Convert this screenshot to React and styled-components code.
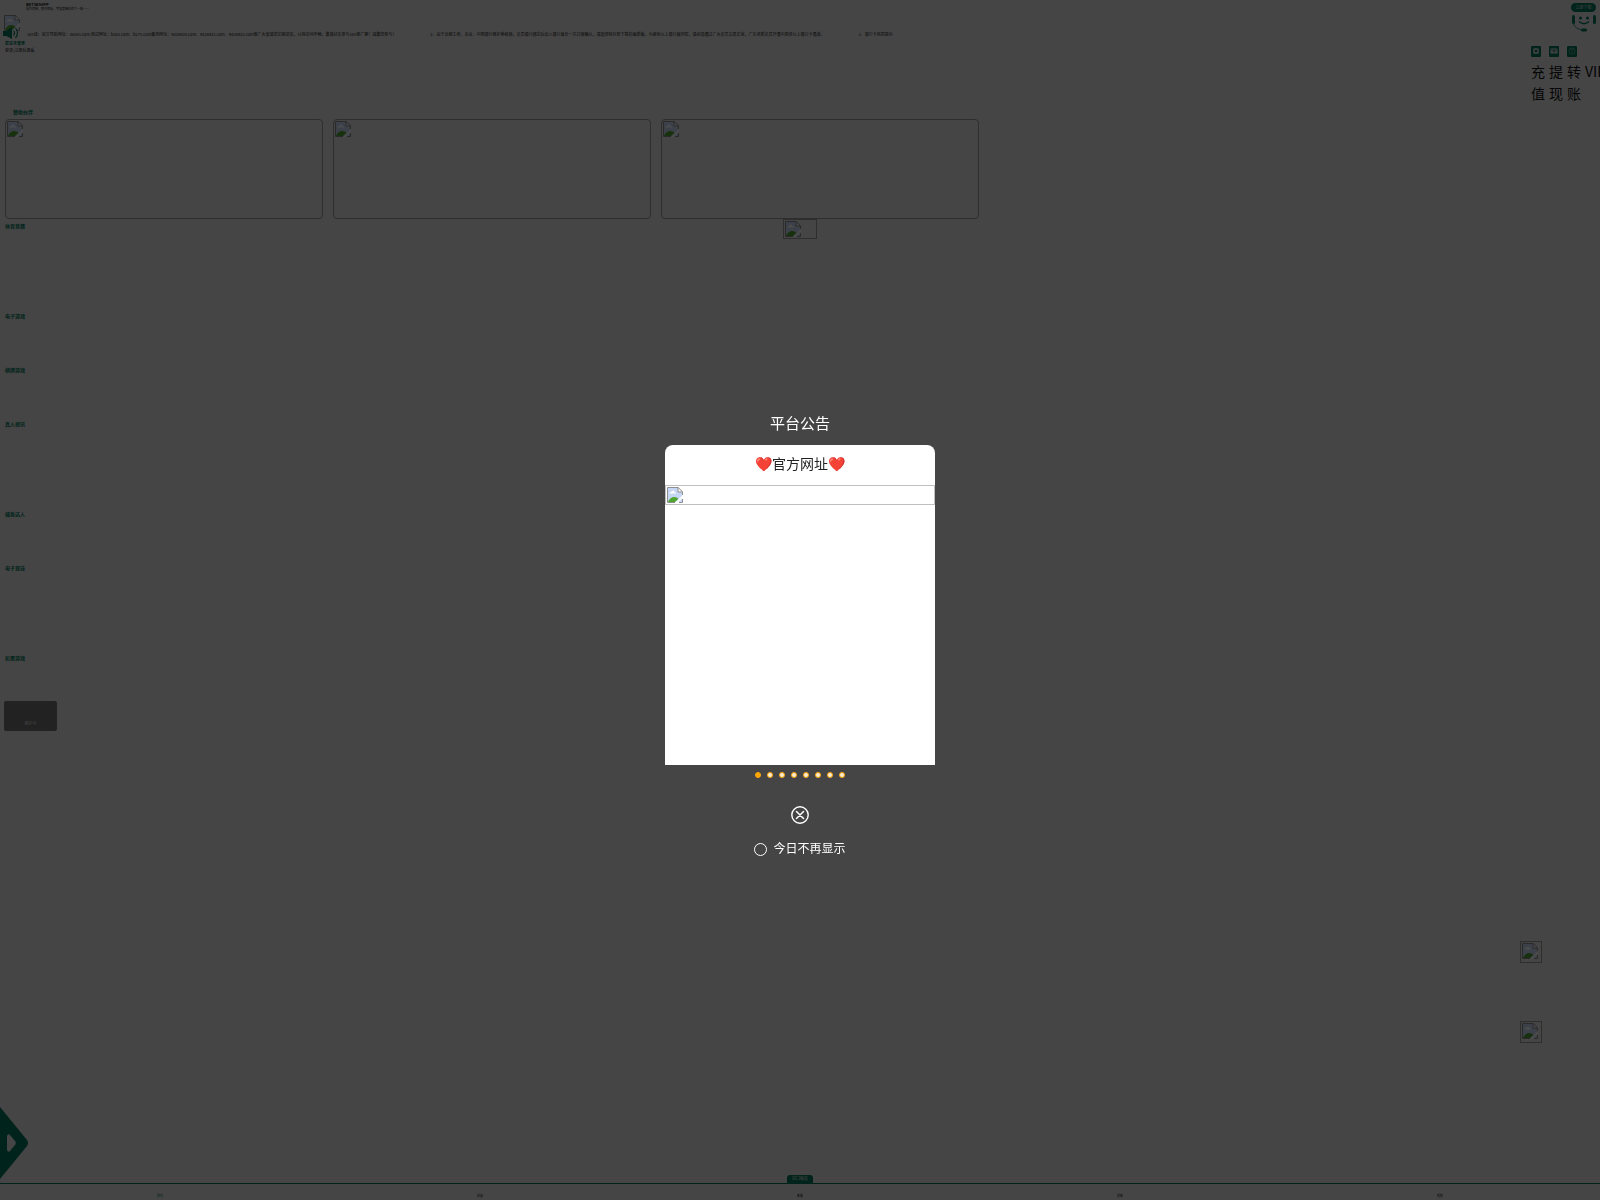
import React, { useState } from 'react';
import styled, { createGlobalStyle } from 'styled-components';

const GREEN = '#00785a';

const GlobalStyle = createGlobalStyle`
  * { box-sizing: border-box; }
  html, body { margin: 0; padding: 0; overflow: hidden; }
  body {
    background: #e6e6e6;
    color: #222;
    font-family: "Noto Sans CJK SC", "Noto Sans", sans-serif;
    font-size: 14px;
  }
  button, input { font: inherit; margin: 0; padding: 0; }
  button { border: 0; background: none; cursor: pointer; }
  h1, h2, p { margin: 0; font-weight: inherit; }
  a { color: inherit; text-decoration: none; }
  svg { display: block; flex: none; }
`;

const Page = styled.div`
  min-height: 100vh;
  overflow: hidden;
`;

const Header = styled.header`
  display: flex;
  justify-content: space-between;
  min-height: 107px;
`;

const HeaderMain = styled.div`
  flex: 1;
  min-width: 0;
`;

const AppPromo = styled.div`
  padding: 2px 0 0 26px;
  font-size: 3px;
  line-height: 5px;
  color: #222;
`;

const AppName = styled.h1`
  font-size: 4px;
  font-weight: 700;
  line-height: 5px;
  color: #111;
`;

const NoticeRow = styled.div`
  display: flex;
  align-items: flex-end;
  height: 26px;
  padding: 2px 0 0 4px;
  margin-top: 1px;
`;

const Avatar = styled.div`
  position: relative;
  width: 16px;
  height: 24px;
  margin-right: 7px;
`;

const Speaker = styled.svg`
  position: absolute;
  left: -1px;
  top: 12px;
`;

const NoticeText = styled.p`
  display: flex;
  font-size: 4px;
  line-height: 6px;
  padding-bottom: 2px;
  color: #222;
  white-space: pre;
`;

const NoticeItem = styled.span`
  flex: none;
  margin-right: 34px;
`;

const UserBox = styled.div`
  padding: 1px 0 0 5px;
  font-size: 4px;
  line-height: 7px;
  color: #222;
`;

const UserName = styled.a`
  display: block;
  font-weight: 700;
  color: ${GREEN};
`;

const HeaderSide = styled.div`
  display: flex;
  flex-direction: column;
  align-items: flex-end;
  width: 69px;
  padding-top: 3px;
`;

const Download = styled.button`
  width: 25px;
  height: 9px;
  margin-right: 4px;
  border-radius: 5px;
  background: ${GREEN};
  color: #ddd;
  font-size: 4px;
  line-height: 7px;
`;

const Service = styled.button`
  margin: 2px 4px 0 0;
`;

const Actions = styled.nav`
  display: flex;
  gap: 4px;
  width: 100%;
  margin-top: 14px;
`;

const Action = styled.a`
  flex: none;
  width: 14px;
  font-size: 14px;
  line-height: 22px;
  color: #111;

  svg { margin-bottom: 3px; }
`;

const ActionGap = styled.span`
  display: block;
  height: 14px;
`;

const SectionTitle = styled.h2`
  padding-left: ${(p) => p.$inset || 5}px;
  font-size: 5px;
  font-weight: 700;
  line-height: 9px;
  color: ${GREEN};
`;

const Partners = styled.div`
  display: flex;
  gap: 10px;
  padding: 3px 5px 0;
`;

const BrokenBox = styled.div`
  flex: none;
  width: ${(p) => p.$width};
  height: ${(p) => p.$height}px;
  padding: 1px;
  border: 1px solid ${(p) => (p.$light ? '#c0c0c0' : '#999')};
  border-radius: ${(p) => p.$radius || 0}px;
`;

const Loading = styled.div`
  display: flex;
  justify-content: center;
  height: 20px;
  margin: 0 0 -18px;
`;

const GameSection = styled.section`
  height: ${(p) => p.$height}px;
`;

const Maintenance = styled.div`
  display: flex;
  align-items: flex-end;
  justify-content: center;
  width: 53px;
  height: 30px;
  margin-left: 4px;
  padding-bottom: 4px;
  border-radius: 2px;
  background: #727272;
  color: #ddd;
  font-size: 4px;
  line-height: 8px;
`;

const FloatStack = styled.aside`
  position: fixed;
  right: 58px;
  bottom: 157px;
  display: flex;
  flex-direction: column;
  gap: 58px;
`;

const SideDrawer = styled.button`
  position: fixed;
  left: 0;
  bottom: 21px;
`;

const TabBar = styled.nav`
  position: fixed;
  left: 0;
  right: 0;
  bottom: 0;
  display: grid;
  grid-template-columns: repeat(5, 1fr);
  height: 17px;
  border-top: 1px solid ${GREEN};
`;

const Tab = styled.a`
  padding-top: 10px;
  font-size: 3px;
  line-height: 5px;
  text-align: center;
  color: ${(p) => (p.$active ? GREEN : '#222')};
`;

const TabBadge = styled.a`
  position: absolute;
  left: calc(50% - 13px);
  bottom: 16px;
  width: 26px;
  height: 9px;
  border-radius: 3px 3px 0 0;
  background: ${GREEN};
  color: #ddd;
  font-size: 4px;
  line-height: 7px;
  text-align: center;
`;

const Overlay = styled.div`
  position: fixed;
  inset: 0;
  z-index: 10;
  display: flex;
  flex-direction: column;
  align-items: center;
  justify-content: center;
  padding-top: 68px;
  background: rgba(0, 0, 0, 0.7);
  color: #fff;
`;

const DialogTitle = styled.h2`
  margin-bottom: 12px;
  font-size: 15px;
  line-height: 21px;
`;

const Panel = styled.div`
  width: 270px;
  height: 320px;
  border-radius: 8px 8px 0 0;
  background: #fff;
  color: #222;
`;

const PanelTitle = styled.p`
  padding-bottom: 4px;
  font-size: 14px;
  line-height: 36px;
  text-align: center;
`;

const Dots = styled.div`
  display: flex;
  gap: 6px;
  margin-top: 7px;
`;

const Dot = styled.button`
  width: 6px;
  height: 6px;
  border: 1px solid #ffa500;
  border-radius: 50%;
  background: ${(p) => (p.$active ? '#ffa500' : '#ffecd6')};
`;

const Close = styled.button`
  margin-top: 28px;
  line-height: 0;
`;

const HideToday = styled.label`
  display: flex;
  align-items: flex-end;
  gap: 6px;
  margin-top: 15px;
  font-size: 12px;
  line-height: 18px;
`;

const Check = styled.input`
  appearance: none;
  width: 13px;
  height: 13px;
  margin-bottom: 1px;
  border: 1px solid #fff;
  border-radius: 50%;

  &:checked { background: #ffa500; }
`;

function BrokenIcon() {
  return (
    <svg width="16" height="16" viewBox="0 0 16 16" aria-hidden="true">
      <path d="M1 1h10l4 4v10H1z" fill="#c6d7f5" />
      <path d="M2.500 6.500c0-1.300 1-1.800 1.800-1.500.6-1.600 3-1.500 3.200.2 1-.1 1.500.5 1.500 1.300z" fill="#fff" />
      <path d="M1 15c1-3 3.500-5 6.200-5 2 0 3.300.9 4.300 2L8 15z" fill="#4fa52f" />
      <path d="M16 7.500 7.500 16H11l5-5z" fill="#fff" opacity=".8" />
      <path d="M11 1v4h4z" fill="#fff" />
      <path d="M15.500 8V4.800L11.200.5H.5v15H8M11 .5V5h4.500M12 15.500h3.500V12" fill="none" stroke="#8e8e8e" />
    </svg>
  );
}

function BrokenImage(props) {
  return (
    <BrokenBox {...props}>
      <BrokenIcon />
    </BrokenBox>
  );
}

function ActionIcon({ kind }) {
  return (
    <svg width="10" height="11" viewBox="0 0 10 11" aria-hidden="true">
      <rect width="10" height="11" rx="1" fill={GREEN} />
      {kind === 'deposit' && (
        <>
          <circle cx="5" cy="5" r="2.200" fill="none" stroke="#ddd" strokeWidth="1.500" />
          <path d="M2.500 3.200h1M6.500 3.200h1M2.500 7.200h1M6.500 7.200h1" stroke="#ddd" />
        </>
      )}
      {kind === 'withdraw' && (
        <>
          <rect x="1.500" y="2.500" width="7" height="5" fill="#ddd" />
          <path d="M1.500 4h7M5 4v2.500M3.800 5.300h2.400" stroke={GREEN} strokeWidth=".7" />
        </>
      )}
      {kind === 'transfer' && (
        <>
          <circle cx="5" cy="5" r="3" fill="none" stroke="#7fb5a5" strokeWidth=".7" />
          <path d="M4 4c0-1.500 2.200-1.200 2 0-.1.8-1 .7-1 1.800M5 6.500v.7" fill="none" stroke="#7fb5a5" strokeWidth=".7" />
        </>
      )}
    </svg>
  );
}

const notices = [
  '365线：官方导航网址：46365.com 测试网址：b365.com、b275.com备用网址：9426920.com、9426921.com、9426922.com推广大使请您定期浏览，以得访问不畅。邀请好友参与365推广惠！诚邀您参与！',
  '2、由于近期工商、农业、中国银行维护系统频，会员银行绑定后出入银行最长一共只需确认，请选择除存款下载的最新版，为避免以上银行被列控，请必选通过广大会员交易正常，广东省新会员开通中国省以上银行卡通道。',
  '3、银行卡风控提示',
];

const sections = [
  ['体育竞猜', 90],
  ['电子游戏', 54],
  ['棋牌游戏', 54],
  ['真人视讯', 90],
  ['捕鱼达人', 54],
  ['电子竞技', 90],
  ['彩票游戏', 48],
];

const tabs = ['首页', '优惠', '客服', '赞助', '我的'];

export default function App() {
  const [slide, setSlide] = useState(0);
  const [open, setOpen] = useState(true);

  return (
    <>
      <GlobalStyle />
      <Page>
        <Header>
          <HeaderMain>
            <AppPromo>
              <AppName>BET365APP</AppName>
              <p>操作简单，即开即玩，等您更精彩的下一刻……</p>
            </AppPromo>
            <NoticeRow>
              <Avatar>
                <BrokenIcon />
                <Speaker width="16" height="12" viewBox="0 0 16 12" aria-hidden="true">
                  <path d="M0 4h3.500L9 0v12L3.500 9H0z" fill={GREEN} />
                  <path d="M10.500 3.500q2 2.500 0 5M12.500 1q4 5 0 10" fill="none" stroke={GREEN} strokeWidth="1.200" />
                </Speaker>
              </Avatar>
              <NoticeText>
                {notices.map((n) => <NoticeItem key={n}>{n}</NoticeItem>)}
              </NoticeText>
            </NoticeRow>
            <UserBox>
              <UserName href="#login">您还未登录</UserName>
              <p>登录/注册后查看</p>
            </UserBox>
          </HeaderMain>
          <HeaderSide>
            <Download>立即下载</Download>
            <Service aria-label="客服">
              <svg width="24" height="18" viewBox="0 0 24 18" aria-hidden="true">
                <rect x="0" y="1" width="3" height="9" rx="1.500" fill={GREEN} />
                <rect x="21" y="1" width="3" height="9" rx="1.500" fill={GREEN} />
                <circle cx="8.500" cy="4" r="1.500" fill={GREEN} />
                <circle cx="15.500" cy="4" r="1.500" fill={GREEN} />
                <path d="M7 7.500q5 4.500 10 0" fill="none" stroke={GREEN} strokeWidth="1.300" />
                <path d="M1.500 10q2 5 9 6" fill="none" stroke={GREEN} strokeWidth=".8" />
                <rect x="9" y="14.500" width="6" height="3" rx="1.500" fill={GREEN} />
              </svg>
            </Service>
            <Actions>
              <Action href="#deposit"><ActionIcon kind="deposit" />充值</Action>
              <Action href="#withdraw"><ActionIcon kind="withdraw" />提现</Action>
              <Action href="#transfer"><ActionIcon kind="transfer" />转账</Action>
              <Action href="#vip"><ActionGap />VIP</Action>
            </Actions>
          </HeaderSide>
        </Header>

        <SectionTitle $inset={13}>赞助伙伴</SectionTitle>
        <Partners>
          {[0, 1, 2].map((i) => <BrokenImage key={i} $width="20%" $height={100} $radius={4} />)}
        </Partners>
        <Loading><BrokenImage $width="34px" $height={20} /></Loading>
        {sections.map(([name, height]) => (
          <GameSection key={name} $height={height}>
            <SectionTitle>{name}</SectionTitle>
          </GameSection>
        ))}
        <Maintenance>维护中</Maintenance>

        <FloatStack>
          <BrokenImage $width="22px" $height={22} />
          <BrokenImage $width="22px" $height={22} />
        </FloatStack>
        <SideDrawer aria-label="展开">
          <svg width="28" height="72" viewBox="0 0 28 72" aria-hidden="true">
            <path
              d="M0 0 27 33q2 3 0 6L0 72zM7 29v14q1 3 3 1l5-6q1.500-2 0-4l-5-6q-2-2-3 1z"
              fill={GREEN}
              fillRule="evenodd"
            />
          </svg>
        </SideDrawer>
        <TabBar>
          {tabs.map((t, i) => <Tab key={t} href={`#tab${i}`} $active={i === 0}>{t}</Tab>)}
          <TabBadge href="#hot">进口甄选</TabBadge>
        </TabBar>
      </Page>

      {open && (
        <Overlay role="dialog" aria-label="平台公告">
          <DialogTitle>平台公告</DialogTitle>
          <Panel>
            <PanelTitle>❤️官方网址❤️</PanelTitle>
            <BrokenImage $width="100%" $height={20} $light />
          </Panel>
          <Dots>
            {Array.from({ length: 8 }, (_, i) => (
              <Dot key={i} $active={i === slide} aria-label={`公告 ${i + 1}`} onClick={() => setSlide(i)} />
            ))}
          </Dots>
          <Close aria-label="关闭" onClick={() => setOpen(false)}>
            <svg width="18" height="18" viewBox="0 0 18 18" aria-hidden="true">
              <circle cx="9" cy="9" r="8.200" fill="none" stroke="#fff" strokeWidth="1.400" />
              <path d="m5.500 5.500 7 7m0-7-7 7" stroke="#fff" strokeWidth="1.500" strokeLinecap="round" />
            </svg>
          </Close>
          <HideToday htmlFor="hide-today">
            <Check type="checkbox" id="hide-today" />
            今日不再显示
          </HideToday>
        </Overlay>
      )}
    </>
  );
}
